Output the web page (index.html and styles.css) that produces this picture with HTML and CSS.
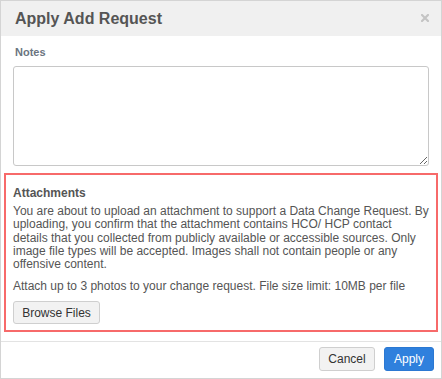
FILE: index.html
```html
<!DOCTYPE html>
<html>
<head>
<meta charset="utf-8">
<link rel="stylesheet" href="styles.css">
</head>
<body>
<div class="dialog">
  <div class="header">
    <h1 class="title">Apply Add Request</h1>
    <span class="close"><svg width="8" height="8" viewBox="0 0 8 8"><path d="M1 1L7 7M7 1L1 7" stroke="#c4c4c4" stroke-width="2.2" stroke-linecap="square"/></svg></span>
  </div>
  <div class="body">
    <label class="label">Notes</label>
    <textarea class="notes"></textarea>
    <section class="attach">
      <h2 class="attach-title">Attachments</h2>
      <p class="text">You are about to upload an attachment to support a Data Change Request. By uploading, you confirm that the attachment contains HCO/ HCP contact details that you collected from publicly available or accessible sources. Only image file types will be accepted. Images shall not contain people or any offensive content.</p>
      <p class="text limit">Attach up to 3 photos to your change request. File size limit: 10MB per file</p>
      <button class="btn browse">Browse Files</button>
    </section>
  </div>
  <div class="footer">
    <button class="btn cancel">Cancel</button>
    <button class="btn primary">Apply</button>
  </div>
</div>
</body>
</html>
```
FILE: styles.css
```css
* { box-sizing: border-box; }
html, body { margin: 0; padding: 0; background: #fff; }
body { font-family: "Liberation Sans", Arial, Helvetica, sans-serif; color: #555; }
.dialog {
  width: 442px;
  height: 379px;
  border: 1px solid #d4d4d4;
  display: flex;
  flex-direction: column;
}
.header {
  height: 35px;
  background: #f0f0f0;
  display: flex;
  align-items: center;
  justify-content: space-between;
  padding: 0 12px 0 14px;
}
.title {
  margin: 0;
  font-size: 16px;
  font-weight: bold;
  color: #555;
  line-height: 20px;
}
.close { display: flex; width: 8px; height: 8px; margin-top: -2px; }
.body {
  padding: 10px 0 0;
  display: flex;
  flex-direction: column;
}
.label {
  font-size: 11px;
  font-weight: bold;
  color: #6b7480;
  line-height: 13px;
  margin: 0 12px 7px 14px;
}
.notes {
  margin: 0 12px;
  height: 100px;
  border: 1px solid #c8c8c8;
  border-radius: 3px;
  resize: vertical;
  font-family: inherit;
}
.attach {
  margin: 7px 3px 0;
  border: 2px solid #f76a6a;
  padding: 11px 7px 6px;
}
.attach-title {
  margin: 0;
  font-size: 12px;
  font-weight: bold;
  color: #555;
  line-height: 14px;
}
.text {
  margin: 5px 0 0;
  font-size: 12px;
  line-height: 13.3px;
  color: #555;
}
.limit { margin-top: 9px; }
.btn {
  font-family: inherit;
  font-size: 12px;
  height: 24px;
  border-radius: 3px;
  border: 1px solid #cfcfcf;
  background: #f2f2f2;
  color: #333;
  padding: 0 9px;
  line-height: 22px;
}
.browse { margin-top: 7px; width: 87px; height: 23px; padding: 0; }
.footer {
  margin-top: 9px;
  border-top: 1px solid #e3e3e3;
  display: flex;
  justify-content: flex-end;
  gap: 9px;
  padding: 5px 7px 0;
}
.cancel { width: 56px; padding: 0; }
.primary {
  width: 50px;
  padding: 0;
  background: #2f80dd;
  border-color: #2b78d2;
  color: #fff;
}
```
